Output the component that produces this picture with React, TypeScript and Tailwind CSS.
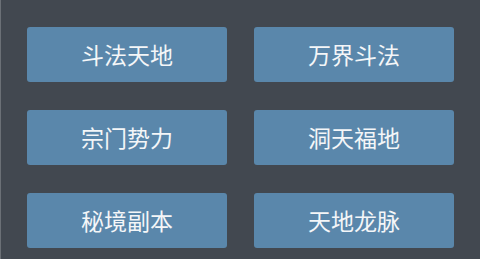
const items = ["斗法天地", "万界斗法", "宗门势力", "洞天福地", "秘境副本", "天地龙脉"];

export default function App() {
  return (
    <div className="h-[259px] w-[480px] overflow-hidden border-l border-[#6b7076] bg-[#424850] pl-[26px] pt-[27px]">
      <div className="grid grid-cols-[200px_200px] gap-x-[27px] gap-y-[28px]">
        {items.map((label) => (
          <button
            key={label}
            type="button"
            className="flex h-[55px] items-center justify-center rounded-[3px] bg-[#5a87ab] text-[23px] text-[#f4f6f8]"
            style={{ fontFamily: '"Noto Sans CJK SC", "Noto Sans", sans-serif' }}
          >
            {label}
          </button>
        ))}
      </div>
    </div>
  );
}
